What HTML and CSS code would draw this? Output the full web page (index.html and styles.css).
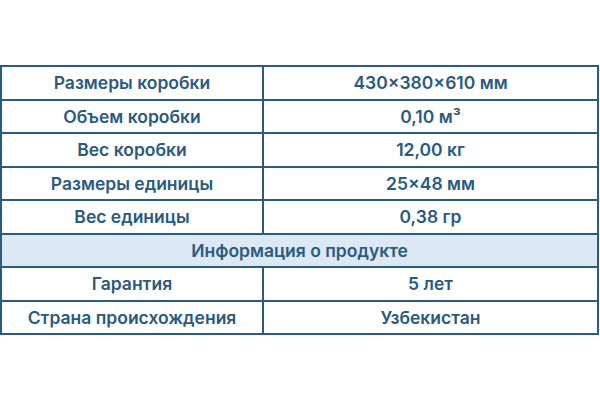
FILE: index.html
```html
<!DOCTYPE html>
<html lang="ru">
<head>
<meta charset="utf-8">
<link rel="stylesheet" href="styles.css">
</head>
<body>
<div class="page">
<table class="specs">
  <colgroup><col class="c1"><col class="c2"></colgroup>
  <tbody>
    <tr><td>Размеры коробки</td><td>430×380×610 мм</td></tr>
    <tr><td>Объем коробки</td><td>0,10 м³</td></tr>
    <tr><td>Вес коробки</td><td>12,00 кг</td></tr>
    <tr><td>Размеры единицы</td><td>25×48 мм</td></tr>
    <tr><td>Вес единицы</td><td>0,38 гр</td></tr>
    <tr class="section"><td colspan="2">Информация о продукте</td></tr>
    <tr><td>Гарантия</td><td>5 лет</td></tr>
    <tr><td>Страна происхождения</td><td>Узбекистан</td></tr>
  </tbody>
</table>
</div>
</body>
</html>
```
FILE: styles.css
```css
html, body {
  margin: 0;
  background: #ffffff;
}
.page {
  padding-top: 65px;
}
.specs {
  width: 599px;
  border-collapse: collapse;
  font-family: Inter, "Noto Sans", sans-serif;
  font-weight: 600;
  font-size: 17.5px;
  color: #2a5a7d;
}
.specs .c1 { width: 262px; }
.specs td {
  border: 2px solid #2b5c80;
  height: 31.5px;
  padding: 0;
  text-align: center;
  vertical-align: middle;
}
.specs .section td {
  background: #dce9f5;
}
```
